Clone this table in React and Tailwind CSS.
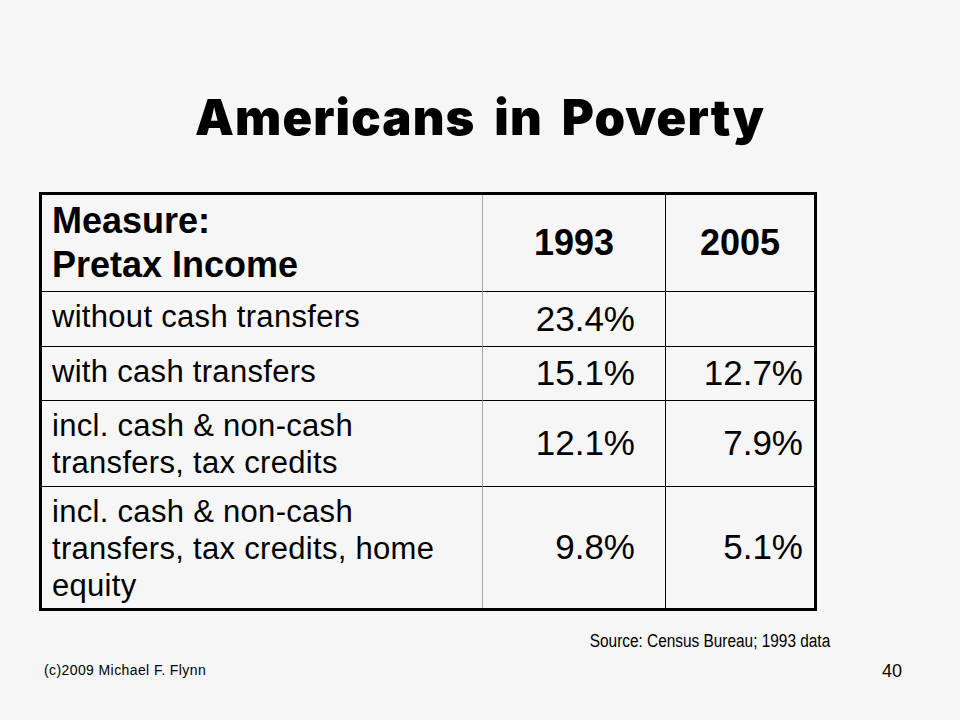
import React from 'react'

const rows = [
  { label: ['without cash transfers'], y1993: '23.4%', y2005: '' },
  { label: ['with cash transfers'], y1993: '15.1%', y2005: '12.7%' },
  { label: ['incl. cash & non-cash', 'transfers, tax credits'], y1993: '12.1%', y2005: '7.9%' },
  { label: ['incl. cash & non-cash', 'transfers, tax credits, home', 'equity'], y1993: '9.8%', y2005: '5.1%' },
]

const App = () => {
  return (
    <div
      className="w-[960px] h-[720px] bg-[#f6f6f6] text-black pt-[88px] overflow-hidden"
      style={{ fontFamily: '"Liberation Sans", Arial, sans-serif' }}
    >
      {/* Title */}
      <h1
        className="h-[60px] text-center text-[49px] leading-[60px] font-black tracking-[1.1px] [word-spacing:8px]"
        style={{ fontFamily: 'Inter, "DejaVu Sans", sans-serif' }}
      >
        Americans in Poverty
      </h1>

      {/* Table */}
      <div className="ml-[39px] mt-[44px] w-[778px] border-[3px] border-black grid grid-cols-[441px_183px_148px] grid-rows-[97px_55px_54px_86px_121px]">
        <div className="border-r border-b border-r-[#a8a8a8] border-b-black pl-[10px] pt-[4px] text-[36px] leading-[44px] font-bold">
          <div>Measure:</div>
          <div>Pretax Income</div>
        </div>
        <div className="border-r border-b border-black flex items-center justify-center text-[36px] font-bold">
          1993
        </div>
        <div className="border-b border-black flex items-center justify-center text-[36px] font-bold">
          2005
        </div>

        {rows.map((row, i) => {
          const last = i === rows.length - 1
          return (
            <React.Fragment key={i}>
              <div
                className={`border-r border-r-[#a8a8a8] border-b-black pl-[10px] pt-[6px] text-[31px] leading-[37px] tracking-[0.3px] ${
                  last ? '' : 'border-b'
                }`}
              >
                {row.label.map((line, j) => (
                  <div key={j}>{line}</div>
                ))}
              </div>
              <div
                className={`border-r border-black flex items-center justify-end pr-[30px] text-[35px] ${
                  last ? '' : 'border-b'
                }`}
              >
                {row.y1993}
              </div>
              <div
                className={`border-black flex items-center justify-end pr-[11px] text-[35px] ${
                  last ? '' : 'border-b'
                }`}
              >
                {row.y2005}
              </div>
            </React.Fragment>
          )
        })}
      </div>

      {/* Footer */}
      <div className="mt-[20px] pr-[130px] text-right text-[18px] leading-[21px]">
        <span className="inline-block origin-right scale-x-[0.855]">
          Source: Census Bureau; 1993 data
        </span>
      </div>
      <div className="mt-[9px] flex items-start justify-between pl-[44px] pr-[58px]">
        <span className="mt-[1px] text-[14px] leading-[16px] tracking-[0.4px]">(c)2009 Michael F. Flynn</span>
        <span className="text-[18px] leading-[21px]">40</span>
      </div>
    </div>
  )
}

export default App
